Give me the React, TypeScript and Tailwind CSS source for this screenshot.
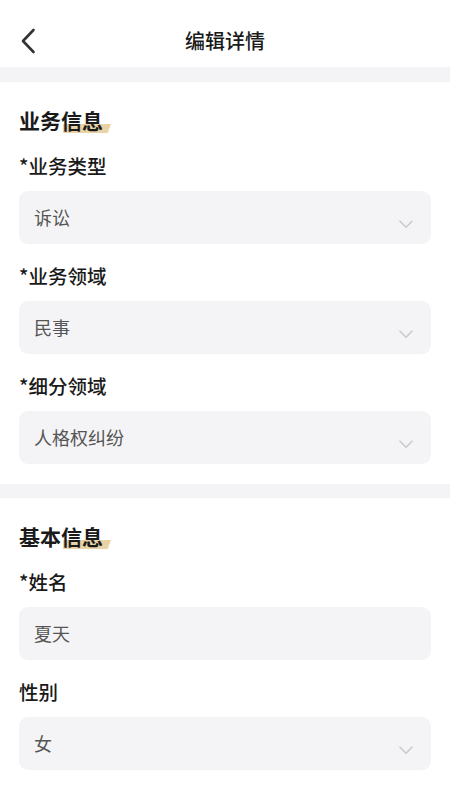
import React from "react";

const FONT = { fontFamily: '"Noto Sans CJK SC", "Noto Sans", sans-serif' };

function Chevron() {
  return (
    <svg width="14" height="9" viewBox="0 0 14 9" className="mt-[13px] shrink-0" fill="none">
      <path d="M1 1.2 L7 7.2 L13 1.2" stroke="#cacaca" strokeWidth="1.6" strokeLinecap="round" strokeLinejoin="round" />
    </svg>
  );
}

function Highlighted({ plain, hl }: { plain: string; hl: string }) {
  return (
    <div className="h-[28px] text-[21px] leading-[28px] font-bold text-[#1a1a1a] flex">
      <span>{plain}</span>
      <span className="relative isolate inline-block">
        <span className="absolute left-[2px] right-[-8px] bottom-[1px] h-[9px] -z-10 bg-[#e9d2a6] [clip-path:polygon(0_0,100%_0,93%_100%,0_100%)]" />
        {hl}
      </span>
    </div>
  );
}

function Label({ text, className = "" }: { text: string; className?: string }) {
  return (
    <div className={"h-[24px] text-[19.5px] leading-[24px] font-medium text-[#1a1a1a] " + className}>{text}</div>
  );
}

function Field({ value, select = true }: { value: string; select?: boolean }) {
  return (
    <div className="mt-[13px] h-[53px] rounded-[9px] bg-[#f4f4f6] flex items-center justify-between pl-[15px] pr-[18px]">
      <span className="text-[18px] text-[#555555]">{value}</span>
      {select && <Chevron />}
    </div>
  );
}

export default function App() {
  return (
    <div className="w-[450px] min-h-[800px] bg-white" style={FONT}>
      <div className="h-[67px] pt-[15px] relative flex items-start">
        <div className="h-[52px] w-full flex items-center justify-center relative">
          <svg width="16" height="26" viewBox="0 0 16 26" fill="none" className="absolute left-[20px] top-[13px]">
            <path d="M13.5 2 L3 13 L13.5 24" stroke="#333333" strokeWidth="2.6" strokeLinecap="round" strokeLinejoin="round" />
          </svg>
          <span className="text-[20px] font-medium text-[#1a1a1a] leading-[28px]">编辑详情</span>
        </div>
      </div>
      <div className="h-[15px] bg-[#f4f4f6]" />
      <div className="px-[19px] pt-[24px] pb-[20px]">
        <Highlighted plain="业务" hl="信息" />
        <Label text="*业务类型" className="mt-[20px]" />
        <Field value="诉讼" />
        <Label text="*业务领域" className="mt-[20px]" />
        <Field value="民事" />
        <Label text="*细分领域" className="mt-[20px]" />
        <Field value="人格权纠纷" />
      </div>
      <div className="h-[14px] bg-[#f4f4f6]" />
      <div className="px-[19px] pt-[24px] pb-[20px]">
        <Highlighted plain="基本" hl="信息" />
        <Label text="*姓名" className="mt-[20px]" />
        <Field value="夏天" select={false} />
        <Label text="性别" className="mt-[20px]" />
        <Field value="女" />
      </div>
    </div>
  );
}
